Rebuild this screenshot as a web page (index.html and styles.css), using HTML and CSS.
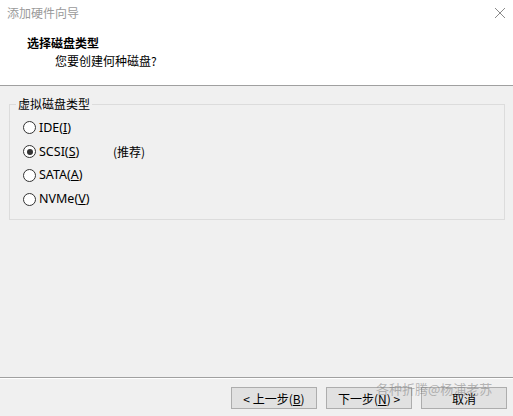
FILE: index.html
```html
<!DOCTYPE html>
<html lang="zh">
<head>
<meta charset="utf-8">
<link rel="stylesheet" href="styles.css">
</head>
<body>
<div class="dialog">
  <div class="header">
    <div class="titlebar">
      <span class="wintitle">添加硬件向导</span>
      <svg class="close" width="12" height="12" viewBox="0 0 12 12"><path d="M1 1L11 11M11 1L1 11" stroke="#8a8a8a" stroke-width="1" fill="none"/></svg>
    </div>
    <div class="heading">选择磁盘类型</div>
    <div class="subheading">您要创建何种磁盘?</div>
  </div>
  <div class="body">
    <fieldset class="group">
      <legend>虚拟磁盘类型</legend>
      <div class="option"><span class="radio"></span><span>IDE(<u>I</u>)</span></div>
      <div class="option"><span class="radio checked"></span><span class="lbl">SCSI(<u>S</u>)</span><span class="rec">(推荐)</span></div>
      <div class="option"><span class="radio"></span><span>SATA(<u>A</u>)</span></div>
      <div class="option"><span class="radio"></span><span>NVMe(<u>V</u>)</span></div>
    </fieldset>
  </div>
  <div class="footer">
    <button class="btn">&lt; 上一步(<u>B</u>)</button>
    <button class="btn">下一步(<u>N</u>) &gt;</button>
    <button class="btn">取消</button>
    <span class="watermark">各种折腾@杨浦老苏</span>
  </div>
</div>
</body>
</html>
```
FILE: styles.css
```css
html, body {
  margin: 0;
  padding: 0;
}
body {
  width: 513px;
  height: 416px;
  background: #f0f0f0;
  font-family: "Noto Sans", "Noto Sans CJK SC", sans-serif;
  font-size: 12.5px;
  color: #000;
  overflow: hidden;
}
.dialog {
  display: flex;
  flex-direction: column;
  height: 416px;
}
.header {
  background: #fff;
  border-bottom: 1px solid #a0a0a0;
  box-sizing: border-box;
  height: 86px;
  flex: none;
}
.titlebar {
  display: flex;
  justify-content: space-between;
  align-items: center;
  height: 28px;
  padding: 0 8px 0 7px;
}
.wintitle {
  color: #9a9a9a;
  font-family: "Noto Sans CJK SC", sans-serif;
  font-size: 12px;
  line-height: 28px;
  margin-top: -2px;
}
.close {
  margin-top: -2px;
  margin-right: -1px;
}
.heading {
  font-family: "Noto Sans CJK SC", sans-serif;
  font-weight: bold;
  font-size: 12px;
  line-height: 16px;
  margin-left: 27px;
  margin-top: 7px;
}
.subheading {
  font-family: "Noto Sans CJK SC", sans-serif;
  font-size: 12px;
  line-height: 16px;
  margin-left: 55px;
  margin-top: 2px;
}
.body {
  flex: 1;
  padding: 11px 8px 0 9px;
}
.group {
  margin: 0;
  border: 1px solid #dcdcdc;
  padding: 5px 0 0 13px;
  height: 123px;
  box-sizing: border-box;
  width: 496px;
}
.group legend {
  font-family: "Noto Sans CJK SC", sans-serif;
  font-size: 12px;
  padding: 0 2px;
  margin-left: -7px;
  line-height: 14px;
}
.option {
  display: flex;
  align-items: center;
  height: 23.8px;
  line-height: 16px;
}
.radio {
  width: 11px;
  height: 11px;
  border: 1px solid #333;
  border-radius: 50%;
  background: #fff;
  margin-right: 3px;
  position: relative;
  flex: none;
}
.radio.checked::after {
  content: "";
  position: absolute;
  left: 2.5px;
  top: 2.5px;
  width: 6px;
  height: 6px;
  border-radius: 50%;
  background: #333;
}
.lbl {
  width: 74px;
}
.rec {
  font-family: "Noto Sans CJK SC", sans-serif;
  font-size: 12px;
}
.footer {
  flex: none;
  height: 39px;
  box-sizing: border-box;
  border-top: 1px solid #a0a0a0;
  box-shadow: inset 0 1px 0 #fff;
  display: flex;
  align-items: flex-start;
  justify-content: flex-end;
  padding: 9px 6px 0 0;
  gap: 9px;
  position: relative;
}
.btn {
  width: 86px;
  height: 22px;
  background: #e1e1e1;
  border: 1px solid #adadad;
  font-family: "Noto Sans CJK SC", sans-serif;
  font-size: 12px;
  padding: 0;
  color: #000;
}
.watermark {
  position: absolute;
  left: 376px;
  top: 1px;
  color: rgba(120, 120, 120, 0.5);
  font-family: "Noto Sans CJK SC", sans-serif;
  font-size: 13px;
  pointer-events: none;
}
```
